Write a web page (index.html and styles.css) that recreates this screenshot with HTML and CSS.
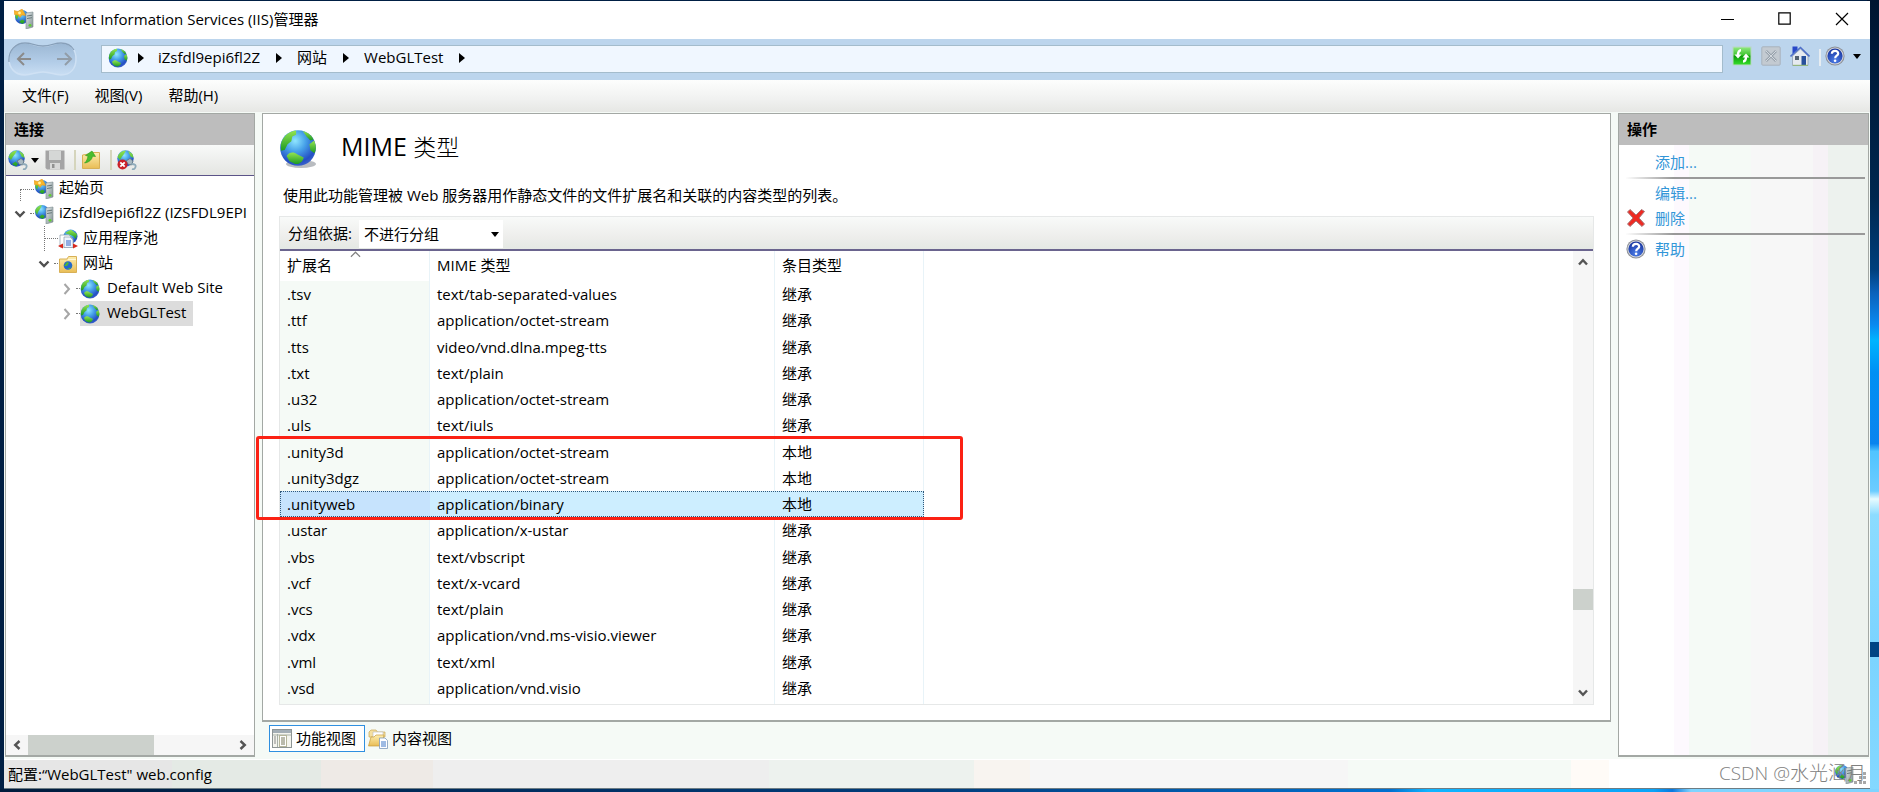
FILE: index.html
```html
<!DOCTYPE html>
<html lang="zh-CN">
<head>
<meta charset="utf-8">
<title>Internet Information Services (IIS)管理器</title>
<link rel="stylesheet" href="styles.css">
</head>
<body>
<svg class="defs" aria-hidden="true">
  <defs>
    <radialGradient id="sea" cx=".42" cy=".3" r=".75">
      <stop offset="0" stop-color="#8fe6ff"/><stop offset=".4" stop-color="#46a0e8"/><stop offset=".8" stop-color="#2450c4"/><stop offset="1" stop-color="#3f66cc"/>
    </radialGradient>
    <linearGradient id="land" x1="0" y1="0" x2="0" y2="1">
      <stop offset="0" stop-color="#94e450"/><stop offset="1" stop-color="#1c9a22"/>
    </linearGradient>
    <linearGradient id="metal" x1="0" y1="0" x2="1" y2="1">
      <stop offset="0" stop-color="#e4ecee"/><stop offset="1" stop-color="#7d8c8e"/>
    </linearGradient>
    <linearGradient id="paperfold" x1="0" y1="0" x2="0" y2="1">
      <stop offset="0" stop-color="#fdeeb0"/><stop offset="1" stop-color="#e9bd55"/>
    </linearGradient>
    <linearGradient id="fresh" x1="0" y1="0" x2="0" y2="1">
      <stop offset="0" stop-color="#8ee87c"/><stop offset=".45" stop-color="#3cc42e"/><stop offset=".5" stop-color="#0a9a0a"/><stop offset="1" stop-color="#35dc28"/>
    </linearGradient>
    <radialGradient id="helpfill" cx=".5" cy=".8" r=".8">
      <stop offset="0" stop-color="#4d7ee8"/><stop offset="1" stop-color="#15319c"/>
    </radialGradient>
    <symbol id="globe" viewBox="0 0 20 20">
      <circle cx="10" cy="10" r="9.400" fill="url(#sea)"/>
      <path d="M1 8C2 4 5 1.200 9 .8L9 3 7 4 6.500 6.500 4.500 8 3 11 1 11.500z" fill="url(#land)"/>
      <path d="M12.500 1C15.500 1.800 17.200 3.500 18.200 5.500L16.500 6 14.500 4z" fill="url(#land)"/>
      <path d="M16 8L18.500 6C19.700 9 19.600 11 18.600 12.800L16.500 11.200z" fill="url(#land)"/>
      <path d="M4 14.200C5.500 11.800 8 12 9.500 13.300L13 15C12.500 17.500 10.500 18.800 8.500 18.400L5.500 17z" fill="url(#land)"/>
    </symbol>
    <symbol id="server" viewBox="0 0 20 20">
      <circle cx="8" cy="8" r="7" fill="url(#sea)"/>
      <path d="M1 7C2 3.500 4.500 1.500 8 1L6 5 4 8 3 11z M5 13L8 10.500 11 12 9 15z" fill="url(#land)"/>
      <path d="M12 4L19 3V18L12 20z" fill="url(#metal)" stroke="#7c8c8e" stroke-width=".6"/>
      <path d="M13 7L18 6.200M13 9.500L18 8.700" stroke="#68787a" stroke-width="1"/>
      <circle cx="16" cy="16.300" r="1.400" fill="#5fd12c"/>
    </symbol>
    <symbol id="star" viewBox="0 0 20 20">
      <use href="#server"/>
      <path d="M0 1.500L4 2.500 8 0 10 3 11.500 6.500 8 6 6 8.500 4 6 .5 5.500z" fill="#f9b52a" stroke="#e09018" stroke-width=".5"/>
      <circle cx="5.500" cy="4" r="1.400" fill="#fff2a0"/>
    </symbol>
    <symbol id="globeplug" viewBox="0 0 20 20">
      <circle cx="8.500" cy="8.500" r="8.200" fill="url(#sea)"/>
      <path d="M.5 7C2 3 5 .8 9 .5L7 4 5 6.500 3 10z M11 .8L15.500 4 16.500 8 13.500 6.500z M4 14L7.500 11.500 10 14 8 16.500z" fill="url(#land)"/>
      <path d="M9 11L13 8.500 16 11 14.500 15 11.500 14.500z" fill="#a9b9c2" stroke="#60747c" stroke-width=".8"/>
      <path d="M14.500 14Q19.500 14 18.500 17T15 19" fill="none" stroke="#8fabba" stroke-width="1.800"/>
    </symbol>
    <symbol id="help" viewBox="0 0 20 20">
      <circle cx="10" cy="10" r="9.600" fill="#8c8f96"/>
      <circle cx="10" cy="10" r="8.600" fill="#d5d8dd"/>
      <circle cx="10" cy="10" r="7.600" fill="url(#helpfill)"/>
      <path d="M6.800 7.800C7 3.800 13.400 4 13.200 7.600 13.100 9.800 10.200 9.600 10.200 12.200" fill="none" stroke="#fff" stroke-width="2.200"/>
      <circle cx="10.100" cy="14.800" r="1.300" fill="#fff"/>
    </symbol>
    <symbol id="expanded" viewBox="0 0 12 8"><path d="M1.500 1.500L6 6 10.500 1.500" fill="none" stroke="#505050" stroke-width="2.400"/></symbol>
    <symbol id="collapsed" viewBox="0 0 8 12"><path d="M1.500 1L6 6 1.500 11" fill="none" stroke="#a6a6a6" stroke-width="2"/></symbol>
    <symbol id="scrolltip" viewBox="0 0 10 8"><path d="M1 6.500L5 2.200 9 6.500" fill="none" stroke="#555" stroke-width="2.400"/></symbol>
    <symbol id="down" viewBox="0 0 8 5"><path d="M0 0H8L4 5z" fill="#000"/></symbol>
    <symbol id="right" viewBox="0 0 6 10"><path d="M0 0L6 5 0 10z" fill="#000"/></symbol>
  </defs>
</svg>

<div class="window">
  <header class="titlebar">
    <svg class="icon"><use href="#star"/></svg>
    <h1 class="titlebar-text">Internet Information Services (IIS)管理器</h1>
    <button class="caption" aria-label="最小化"><svg width="14" height="14"><path d="M0 7.500H13" stroke="#000"/></svg></button>
    <button class="caption" aria-label="最大化"><svg width="14" height="14"><path d="M.8 .8H12.200V12.200H.8z" fill="none" stroke="#000" stroke-width="1.200"/></svg></button>
    <button class="caption" aria-label="关闭"><svg width="14" height="14"><path d="M1 1L13 13M13 1L1 13" stroke="#000" stroke-width="1.200"/></svg></button>
  </header>

  <nav class="addressbar">
    <div class="history">
      <svg class="history-shape" viewBox="0 0 70 34" aria-hidden="true">
        <defs><linearGradient id="pill" x1="0" y1="0" x2="0" y2="1"><stop offset="0" stop-color="#9bb7d3"/><stop offset=".6" stop-color="#b3cde8"/><stop offset="1" stop-color="#c9def3"/></linearGradient></defs>
        <path d="M17 1C24 1 27 4 35 4S46 1 53 1C63 1 68 8 68 17S63 33 53 33C46 33 43 30 35 30S24 33 17 33C7 33 1 26 1 17S7 1 17 1z" fill="url(#pill)" stroke="#cfe1f4" stroke-width="1.500"/>
        <path d="M1 20C0 8 8 1 17 1 24 1 27 4 35 4S46 1 53 1C59 1 63 3 66 8" fill="none" stroke="#87a0ba" stroke-width="1.300"/>
      </svg>
      <button class="history-button" aria-label="后退"><svg width="16" height="14"><path d="M15 7H2M8 1L2 7 8 13" fill="none" stroke="#8b8b8b" stroke-width="2"/></svg></button>
      <button class="history-button" aria-label="前进"><svg width="16" height="14"><path d="M0 7H14M8 1L14 7 8 13" fill="none" stroke="#929da8" stroke-width="2"/></svg></button>
    </div>
    <div class="crumbs">
      <svg class="icon"><use href="#globe"/></svg>
      <svg class="crumb-arrow"><use href="#right"/></svg>
      <a class="crumb" href="#server-node">iZsfdl9epi6fl2Z</a>
      <svg class="crumb-arrow"><use href="#right"/></svg>
      <a class="crumb" href="#sites-node">网站</a>
      <svg class="crumb-arrow"><use href="#right"/></svg>
      <a class="crumb" href="#test-node">WebGLTest</a>
      <svg class="crumb-arrow"><use href="#right"/></svg>
    </div>
    <div class="address-tools">
      <button class="tool" aria-label="刷新"><svg class="icon" viewBox="0 0 20 20"><rect x=".5" y=".5" width="19" height="19" fill="#b8d8c4"/><rect x="1.500" y="1.500" width="17" height="17" fill="url(#fresh)"/><path d="M9 4.200C6.500 4.200 6 6 6 9.500M11 15.500C13.500 15.500 14 13.500 14 10.500" fill="none" stroke="#fff" stroke-width="2.400"/><path d="M2.500 8.500H9.500L6 12.500zM10.500 11.500H17.500L14 7.500z" fill="#fff"/></svg></button>
      <button class="tool" aria-label="停止" disabled><svg class="icon" viewBox="0 0 20 20"><rect x=".8" y=".8" width="18.400" height="18.400" rx="1" fill="#c3cad1" stroke="#a8b2bd"/><path d="M5 5L15 15M15 5L5 15" stroke="#99a3ad" stroke-width="2.600"/><path d="M5 5L15 15M15 5L5 15" stroke="#d3d9df" stroke-width="1"/></svg></button>
      <button class="tool" aria-label="主页"><svg class="icon" viewBox="0 0 20 20"><path d="M2.500 .5H7.500V4.500L2.500 8z" fill="#2848c8"/><path d="M2.500 10L10.500 3 18 10V19.500H2.500z" fill="#e6eaf0" stroke="#8e9caa" stroke-width=".7"/><path d="M.5 10.500L10.500 1.500 19.500 10.500" fill="none" stroke="#5070c8" stroke-width="1.600"/><rect x="5" y="10" width="4" height="4" fill="#526070"/><rect x="11.500" y="10" width="4.500" height="9" fill="#28509c"/><path d="M3 19.300H18" stroke="#90b870"/></svg></button>
      <span class="tool-separator"></span>
      <button class="tool tool-help" aria-label="帮助"><svg class="icon"><use href="#help"/></svg><svg class="drop"><use href="#down"/></svg></button>
    </div>
  </nav>

  <nav class="menubar">
    <button class="menu">文件(F)</button>
    <button class="menu">视图(V)</button>
    <button class="menu">帮助(H)</button>
  </nav>

  <main class="workspace">
    <section class="panel connections">
      <h2 class="panel-title">连接</h2>
      <div class="toolbar">
        <button class="tool" aria-label="连接到"><svg class="icon"><use href="#globeplug"/></svg><svg class="drop"><use href="#down"/></svg></button>
        <button class="tool tool-save" aria-label="保存" disabled><svg class="icon" viewBox="0 0 20 20"><path d="M.5 .5H19.500V19.500H2L.5 18z" fill="#a4a4a4"/><rect x="4" y="1" width="12" height="9" fill="#d5d7d6"/><rect x="5" y="13" width="10" height="6.500" fill="#d8d8d8"/><rect x="7" y="14" width="2.500" height="4" fill="#909090"/></svg></button>
        <span class="toolbar-separator"></span>
        <button class="tool" aria-label="向上"><svg class="icon" viewBox="0 0 20 20"><path d="M1.500 5L8 4 10 2.500H18.500V18.500H1.500z" fill="url(#paperfold)" stroke="#d8b056"/><path d="M3.500 13C5.500 11.500 6.500 9 7 6L4.500 5.500 11 1 14.500 6.500 11.500 6.200C11 9.500 8 12.500 3.500 13z" fill="#49bd2e" stroke="#2d9c1c" stroke-width=".6"/></svg></button>
        <span class="toolbar-separator"></span>
        <button class="tool" aria-label="断开连接"><svg class="icon" viewBox="0 0 20 20"><use href="#globeplug"/><circle cx="5.500" cy="14.500" r="5" fill="#cc2028"/><path d="M3.300 12.300L7.700 16.700M7.700 12.300L3.300 16.700" stroke="#fff" stroke-width="1.800"/></svg></button>
      </div>
      <ul class="tree">
        <li class="node level-1">
          <span class="twist"><span class="elbow elbow-down"></span></span>
          <svg class="icon"><use href="#star"/></svg><span class="label">起始页</span>
        </li>
        <li class="node level-1" id="server-node">
          <span class="twist"><svg class="expanded"><use href="#expanded"/></svg><span class="dash"></span></span>
          <svg class="icon"><use href="#server"/></svg><span class="label">iZsfdl9epi6fl2Z (IZSFDL9EPI</span>
        </li>
        <li class="node level-2">
          <span class="twist"><span class="elbow elbow-through"></span></span>
          <svg class="icon" viewBox="0 0 20 20"><circle cx="12.500" cy="7.500" r="7" fill="url(#sea)"/><path d="M7 4L13 .8 19 5 18 10 15 7z" fill="url(#land)"/><path d="M2 6H11L15 10V18H2z" fill="#fff" stroke="#8899aa" stroke-width=".7"/><path d="M6 8H12L15 11V18.500H6z" fill="#eef4ff" stroke="#8899aa" stroke-width=".7"/><path d="M8 12H13M8 14H13M8 16H13" stroke="#3568c8" stroke-width="1"/><path d="M0 17L5 14.500V19.500zM20 17L15 14.500V19.500z" fill="#d8281c"/></svg><span class="label">应用程序池</span>
        </li>
        <li class="node level-2" id="sites-node">
          <span class="twist"><svg class="expanded"><use href="#expanded"/></svg><span class="dash"></span></span>
          <svg class="icon" viewBox="0 0 20 20"><path d="M1.500 5H9L10.500 2.500H18.500V18.500H1.500z" fill="url(#paperfold)" stroke="#d8b056"/><path d="M10 5.500H18" stroke="#fff8d8"/><circle cx="10" cy="11.500" r="4.300" fill="#2367cf"/><path d="M6 12L9 8 11 9 9 12zM9 15L13 13 14 10 12 15z" fill="#4db735"/></svg><span class="label">网站</span>
        </li>
        <li class="node level-3">
          <span class="twist"><svg class="collapsed"><use href="#collapsed"/></svg><span class="dash"></span></span>
          <svg class="icon"><use href="#globe"/></svg><span class="label">Default Web Site</span>
        </li>
        <li class="node level-3" id="test-node">
          <span class="twist"><svg class="collapsed"><use href="#collapsed"/></svg><span class="dash"></span></span>
          <span class="selected"><svg class="icon"><use href="#globe"/></svg><span class="label">WebGLTest</span></span>
        </li>
      </ul>
      <div class="hscroll">
        <svg class="tip tip-left"><use href="#scrolltip"/></svg>
        <span class="hscroll-track"><span class="hscroll-thumb"></span></span>
        <svg class="tip tip-right"><use href="#scrolltip"/></svg>
      </div>
    </section>

    <section class="center">
      <div class="panel feature">
        <div class="feature-head">
          <svg class="feature-icon" viewBox="0 0 38 40"><ellipse cx="22" cy="35" rx="15" ry="4" fill="#b9bcc0"/><use href="#globe" width="38" height="38"/></svg>
          <h2 class="feature-title">MIME <span class="feature-title-cjk">类型</span></h2>
        </div>
        <p class="feature-note">使用此功能管理被 Web 服务器用作静态文件的文件扩展名和关联的内容类型的列表。</p>
        <div class="list">
          <div class="groupbar">
            <label class="group-label" for="group">分组依据:</label>
            <div class="group-box">
              <select class="group-select" id="group"><option>不进行分组</option></select>
              <svg class="drop group-drop"><use href="#down"/></svg>
            </div>
          </div>
          <div class="list-body">
            <div class="table-wrap">
              <table class="mime">
                <colgroup><col class="col-ext"><col class="col-type"><col class="col-entry"></colgroup>
                <thead>
                  <tr><th>扩展名<svg class="sort" viewBox="0 0 12 7"><path d="M1 6L6 1 11 6" fill="none" stroke="#808080" stroke-width="1.300"/></svg></th><th>MIME 类型</th><th>条目类型</th></tr>
                </thead>
                <tbody>
                  <tr><td>.tsv</td><td>text/tab-separated-values</td><td>继承</td></tr>
                  <tr><td>.ttf</td><td>application/octet-stream</td><td>继承</td></tr>
                  <tr><td>.tts</td><td>video/vnd.dlna.mpeg-tts</td><td>继承</td></tr>
                  <tr><td>.txt</td><td>text/plain</td><td>继承</td></tr>
                  <tr><td>.u32</td><td>application/octet-stream</td><td>继承</td></tr>
                  <tr><td>.uls</td><td>text/iuls</td><td>继承</td></tr>
                  <tr class="marked"><td>.unity3d<span class="marker"></span></td><td>application/octet-stream</td><td>本地</td></tr>
                  <tr><td>.unity3dgz</td><td>application/octet-stream</td><td>本地</td></tr>
                  <tr class="current"><td>.unityweb</td><td>application/binary</td><td>本地</td></tr>
                  <tr><td>.ustar</td><td>application/x-ustar</td><td>继承</td></tr>
                  <tr><td>.vbs</td><td>text/vbscript</td><td>继承</td></tr>
                  <tr><td>.vcf</td><td>text/x-vcard</td><td>继承</td></tr>
                  <tr><td>.vcs</td><td>text/plain</td><td>继承</td></tr>
                  <tr><td>.vdx</td><td>application/vnd.ms-visio.viewer</td><td>继承</td></tr>
                  <tr><td>.vml</td><td>text/xml</td><td>继承</td></tr>
                  <tr><td>.vsd</td><td>application/vnd.visio</td><td>继承</td></tr>
                </tbody>
              </table>
            </div>
            <div class="vscroll">
              <svg class="tip"><use href="#scrolltip"/></svg>
              <span class="vscroll-track"><span class="vscroll-thumb"></span></span>
              <svg class="tip tip-down"><use href="#scrolltip"/></svg>
            </div>
          </div>
        </div>
      </div>
      <div class="tabs">
        <button class="tab tab-active"><svg class="icon" viewBox="0 0 20 20"><rect x=".5" y=".5" width="19" height="18" fill="#f4f4ee" stroke="#8d9494"/><rect x="1" y="1" width="18" height="3" fill="#a3adb5"/><path d="M1 6H19M5.500 5V18" stroke="#a8b0a8"/><path d="M2 8H4M2 10H4M2 12H4M2 14H4" stroke="#888"/><rect x="7.500" y="6.500" width="7" height="11" fill="#fff" stroke="#b5b59a"/><path d="M9 9H13M9 11H13M9 13H13M9 15H13" stroke="#77775a"/></svg><span class="tab-text">功能视图</span></button>
        <button class="tab"><svg class="icon" viewBox="0 0 20 20"><path d="M1 3L3 1H8L9.500 3H17V8H1z" fill="#f5e0a0" stroke="#c8a858" stroke-width=".7"/><path d="M5 3H15V9H5z" fill="#fff" stroke="#bbb" stroke-width=".6"/><path d="M.5 17L3 8H6L8 6H16L13.500 17z" fill="url(#paperfold)" stroke="#c79c3c" stroke-width=".7"/><path d="M11.500 9H17L19.500 11.500V19.500H11.500z" fill="#fff" stroke="#7e99bb" stroke-width=".8"/><path d="M13 13H18M13 15H18M13 17H18" stroke="#3f79c8"/></svg><span class="tab-text">内容视图</span></button>
      </div>
    </section>

    <aside class="panel actions">
      <h2 class="panel-title">操作</h2>
      <ul class="action-list">
        <li class="action action-split"><a href="#add">添加...</a></li>
        <li class="action"><a href="#edit">编辑...</a></li>
        <li class="action action-split"><svg class="icon" viewBox="0 0 20 20"><path d="M1.500 4L4 1.500 10 7 15.500 1.500 18.500 3.500 13 10 18.500 16 16 18.500 10 13 4 18.500 1.500 16 7 10z" fill="#ee2a22" stroke="#a8787a" stroke-width="1"/></svg><a href="#delete">删除</a></li>
        <li class="action"><svg class="icon"><use href="#help"/></svg><a href="#help-page">帮助</a></li>
      </ul>
    </aside>
  </main>

  <footer class="statusbar">
    <span class="status-text">配置:“WebGLTest" web.config</span>
    <span class="status-end">
      <svg class="icon"><use href="#server"/></svg>
      <svg class="grip" width="12" height="12" viewBox="0 0 12 12"><path d="M9 0H12V3H9zM5 4H8V7H5zM9 4H12V7H9zM0 9H3V12H0zM5 9H8V12H5zM9 9H12V12H9z" fill="#a8a8a8"/></svg>
      <span class="watermark">CSDN @水光涵月</span>
    </span>
  </footer>
</div>
</body>
</html>
```

FILE: styles.css
```css
* {
  box-sizing: border-box;
}

body {
  margin: 0;
  min-height: 100vh;
  display: flex;
  padding: 1px 9px 3px 4px;
  font: 15px/24px "Open Sans", "Noto Sans CJK SC", sans-serif;
  color: #000;
  background:
    linear-gradient(90deg, #001b3c, #003d7c 50%, #0070d0 74%, #10b4ff 76%, #0aa4f8 88%, #0878e0 89%, #7fd4ff 90%) bottom / 100% 3px no-repeat,
    linear-gradient(180deg, #001430 0, #00274f 25%, #003f7c 34%, #0a62bc 37%, #0a8af0 41%, #00b4ff 43%, #0090f4 47%, #0a84ee 56%, #50c4ff 57%, #6cccff 62%, #e6fbff 63%, #8cdcff 65%, #7cd4ff 81%, #004484 81%, #004484 83%, #7cd4ff 83%, #84d8ff 100%) right / 12px 100% no-repeat,
    #001f44;
}

button,
select {
  font: inherit;
  color: inherit;
  background: none;
  border: 0;
  padding: 0;
  margin: 0;
}

h1,
h2,
p,
ul {
  margin: 0;
  padding: 0;
  font-weight: 400;
  list-style: none;
}

a {
  color: inherit;
  text-decoration: none;
}

svg {
  display: block;
  flex: none;
}

.defs {
  position: absolute;
  width: 0;
  height: 0;
}

.icon {
  width: 20px;
  height: 20px;
}

.drop {
  width: 8px;
  height: 5px;
}

.window {
  flex: 1;
  min-width: 0;
  display: flex;
  flex-direction: column;
  background: #f5faf6;
  border-bottom: 1px solid #6c7c84;
}

.titlebar {
  height: 38px;
  display: flex;
  align-items: center;
  padding: 0 0 2px 10px;
  background: #fff;
}

.titlebar-text {
  flex: 1;
  margin-left: 6px;
  font-size: 15px;
}

.caption {
  width: 57px;
  height: 36px;
  display: grid;
  place-items: center;
}

.addressbar {
  height: 41px;
  display: flex;
  align-items: center;
  padding: 0 9px 2px 4px;
  background: #bcd5ed;
}

.history {
  position: relative;
  width: 70px;
  height: 34px;
  display: flex;
  align-items: center;
  justify-content: space-between;
  padding: 0 5px 0 8px;
}

.history-shape {
  position: absolute;
  inset: 0;
  width: 100%;
  height: 100%;
}

.history-button {
  position: relative;
}

.crumbs {
  flex: 1;
  height: 28px;
  display: flex;
  align-items: center;
  margin-left: 23px;
  padding: 0 0 1px 6px;
  background: #f0f7ff;
  border: 1px solid #a4bccc;
}

.crumb {
  padding-bottom: 3px;
}

.crumb-arrow {
  width: 6px;
  height: 10px;
  margin: 0 15px 0 16px;
}

.icon + .crumb-arrow {
  margin: 0 14px 0 10px;
}

.address-tools {
  display: flex;
  align-items: center;
  gap: 9px;
  margin-left: 9px;
  padding-bottom: 5px;
}

.tool {
  display: flex;
  align-items: center;
}

.tool-separator {
  width: 2px;
  height: 17px;
  margin: 3px -5px 0 0;
  background: #e7edf2;
}

.tool-help {
  gap: 8px;
}

.menubar {
  height: 32px;
  display: flex;
  align-items: center;
  gap: 26px;
  padding: 0 0 2px 18px;
  background: linear-gradient(#fdfefd, #f0f1f0 60%, #e6e7e4);
}

.workspace {
  flex: 1;
  min-height: 0;
  display: grid;
  grid-template-columns: 250px minmax(0, 1fr) 251px;
  gap: 7px;
  padding: 1px 1px 2px;
}

.panel {
  border: 1px solid #a3a8a4;
  border-bottom-width: 2px;
  background: #fff;
}

.panel-title {
  height: 31px;
  padding: 3px 8px;
  background: #bdbdbd;
  font-size: 15px;
  font-weight: 700;
}

.connections {
  min-width: 0;
  display: flex;
  flex-direction: column;
}

.toolbar {
  height: 31px;
  display: flex;
  align-items: center;
  padding-left: 2px;
  background: linear-gradient(#f8faf9, #ecedeb 60%, #e4e6e2);
  border-bottom: 1px solid #5b5488;
}

.toolbar .drop {
  margin-left: 3px;
}

.tool-save {
  margin-left: 6px;
}

.toolbar-separator {
  width: 2px;
  height: 20px;
  margin: 0 5px 0 9px;
  background: #d5d5bc;
}

.tree {
  flex: 1;
  overflow: hidden;
}

.node {
  height: 25px;
  display: flex;
  align-items: center;
  white-space: nowrap;
}

.level-1 {
  padding-left: 8px;
}

.level-2 {
  padding-left: 32px;
}

.level-3 {
  padding-left: 54px;
}

.twist {
  flex: none;
  position: relative;
  width: 20px;
  height: 25px;
  display: flex;
  align-items: center;
  justify-content: space-between;
}

.expanded {
  width: 12px;
  height: 8px;
}

.collapsed {
  width: 8px;
  height: 12px;
  margin-left: 3px;
}

.dash {
  width: 4px;
  border-top: 1px dotted #777;
}

.elbow {
  position: absolute;
  left: 6px;
  right: 0;
  border-left: 1px dotted #777;
}

.elbow-down {
  top: 13px;
  bottom: 0;
  border-top: 1px dotted #777;
}

.elbow-through {
  top: 0;
  bottom: 0;
}

.elbow-through::after {
  content: "";
  display: block;
  margin-top: 12px;
  border-top: 1px dotted #777;
}

.label {
  margin-left: 5px;
  padding-bottom: 3px;
}

.level-3 .label {
  margin-left: 7px;
}

.selected {
  height: 25px;
  display: flex;
  align-items: center;
  padding-right: 7px;
  background: #dcdcdc;
}

.hscroll {
  height: 20px;
  display: flex;
  align-items: center;
  gap: 6px;
  padding: 0 6px;
  background: #f6f6f6;
}

.hscroll-track {
  flex: 1;
  height: 100%;
}

.hscroll-thumb {
  display: block;
  width: 62%;
  height: 100%;
  background: #ccd1cc;
}

.tip {
  width: 10px;
  height: 8px;
}

.tip-left {
  transform: rotate(-90deg);
}

.tip-right {
  transform: rotate(90deg);
}

.tip-down {
  transform: rotate(180deg);
}

.center {
  min-width: 0;
  display: flex;
  flex-direction: column;
}

.feature {
  flex: 1;
  min-height: 0;
  display: flex;
  flex-direction: column;
  padding: 15px 16px 15px;
}

.feature-head {
  height: 40px;
  display: flex;
  align-items: center;
  gap: 24px;
}

.feature-icon {
  width: 38px;
  height: 40px;
}

.feature-title {
  padding-bottom: 6px;
  font-size: 25px;
  line-height: 36px;
}

.feature-title-cjk {
  font-size: 23px;
  font-weight: 300;
}

.feature-note {
  margin: 14px 0 9px;
  padding-left: 4px;
}

.list {
  flex: 1;
  min-height: 0;
  display: flex;
  flex-direction: column;
  border: 1px solid #e6e8e8;
}

.groupbar {
  height: 34px;
  display: flex;
  align-items: center;
  padding: 2px 0 0 8px;
  background: linear-gradient(#f8faf9, #eeeeec 60%, #e4e8e4);
  border-bottom: 2px solid #6a648e;
}

.group-label {
  padding-bottom: 2px;
}

.group-box {
  position: relative;
  width: 144px;
  height: 28px;
  margin-left: 7px;
  background: #fff;
}

.group-select {
  appearance: none;
  width: 100%;
  height: 100%;
  padding: 0 0 1px 5px;
}

.group-drop {
  position: absolute;
  right: 4px;
  top: 12px;
}

.list-body {
  flex: 1;
  min-height: 0;
  display: flex;
  justify-content: space-between;
}

.table-wrap {
  display: flex;
  padding-bottom: 3px;
  background:
    linear-gradient(90deg, #f5faf6 149px, transparent 149px) 0 30px no-repeat,
    linear-gradient(90deg, transparent 149px, #e8f3f8 149px, #e8f3f8 150px, transparent 150px, transparent 494px, #e8f3f8 494px, #e8f3f8 495px, transparent 495px, transparent 643px, #e8f3f8 643px);
}

.mime {
  width: 644px;
  table-layout: fixed;
  border-collapse: separate;
  border-spacing: 0;
}

.col-ext {
  width: 150px;
}

.col-type {
  width: 345px;
}

.col-entry {
  width: 149px;
}

.mime th,
.mime td {
  padding: 0 7px;
  text-align: left;
  font-weight: 400;
  white-space: nowrap;
}

.mime th {
  position: relative;
  height: 30px;
  padding-bottom: 2px;
}

.sort {
  position: absolute;
  left: 70px;
  top: 0;
  width: 11px;
  height: 7px;
}

.current {
  outline: 1px dotted #30587a;
  outline-offset: -1px;
}

.current td {
  background: #cdeeff;
}

.current td:first-child {
  background: #c6e3fd;
}

.marked td:first-child {
  position: relative;
}

.marker {
  position: absolute;
  left: -24px;
  top: -3px;
  width: 707px;
  height: 84px;
  border: 3px solid #fb2114;
  border-radius: 3px;
}

.vscroll {
  width: 20px;
  display: flex;
  flex-direction: column;
  align-items: center;
  padding: 7px 0;
  background: #f6f6f6;
}

.vscroll-track {
  flex: 1;
  width: 100%;
  display: flex;
  flex-direction: column;
  justify-content: flex-end;
  padding-bottom: 79px;
}

.vscroll-thumb {
  height: 21px;
  background: #ccd1cc;
}

.tabs {
  display: flex;
  gap: 1px;
  padding: 3px 0 5px 7px;
}

.tab {
  height: 27px;
  display: flex;
  align-items: center;
  gap: 4px;
  padding: 0 2px;
}

.tab-text {
  padding-bottom: 2px;
}

.tab-active {
  padding-right: 8px;
  background: #fff;
  border: 1px solid #2f8fe0;
}

.actions {
  background: linear-gradient(90deg, #fff 22%, #fdf9fe 22%, #fdf9fe 28%, #f5faf6 28%, #f5faf6 53%, #f7f7f7 53%, #f7f7f7 78%, #f6f2f6 78%, #f6f2f6 84%, #edf2ee 84%);
}

.action-list {
  padding: 4px 3px 0 7px;
}

.action {
  height: 25px;
  display: flex;
  align-items: center;
  justify-content: flex-start;
  gap: 9px;
  color: #3296d8;
}

.action a:only-child {
  margin-left: 29px;
}

.action-split {
  height: 30px;
  padding-bottom: 3px;
  margin-bottom: 1px;
  border-bottom: 2px solid;
  border-image: linear-gradient(90deg, transparent, #999 20%) 1;
}

.statusbar {
  height: 29px;
  display: flex;
  align-items: center;
  justify-content: space-between;
  padding: 0 4px;
  border-top: 1px solid #fff;
  background: linear-gradient(90deg, #e6e6e6 9%, #e4eae5 9%, #e4eae5 17%, #eeeae6 17%, #eeeae6 23%, #eeeeee 23%, #eeeeee 41%, #edf2ee 41%, #edf2ee 52%, #f8f4f0 52%, #f8f4f0 55%, #f6f6f6 55%, #f6f6f6 72%, #f5faf6 72%, #f5faf6 84%, #fffbf7 84%, #fffbf7 86%, #fff 86%);
}

.status-end {
  position: relative;
  display: flex;
  align-items: flex-end;
}

.watermark {
  position: absolute;
  right: 0;
  bottom: -1px;
  font-size: 19px;
  font-weight: 300;
  line-height: 24px;
  white-space: nowrap;
  color: #808080;
}
```
